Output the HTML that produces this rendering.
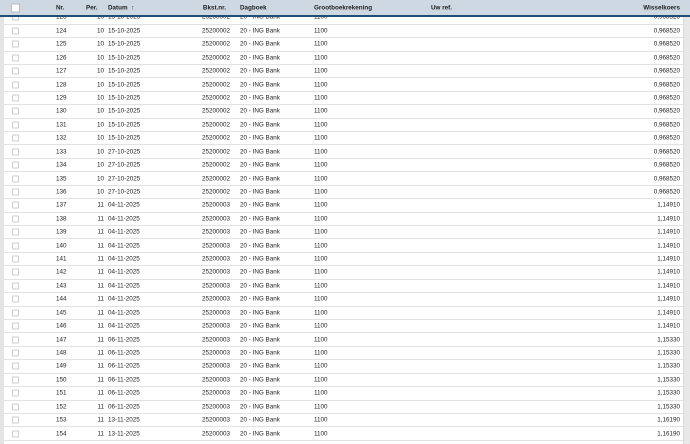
<!DOCTYPE html>
<html><head><style>
*{margin:0;padding:0;box-sizing:border-box}
body{width:690px;height:444px;overflow:hidden;background:#fff;font-family:"Liberation Sans",Arial,sans-serif;font-size:6.3px;color:#222;position:relative}
.lb{position:absolute;left:0;top:0;width:4px;height:444px;background:#e4e4e4}
.sb{position:absolute;right:0;top:0;width:7px;height:444px;background:#e8e8e8;border-left:1px solid #d8d8d8}
#rows{position:absolute;left:4px;right:7px;top:11.27px}
.r{height:13.43px;border-bottom:1px solid #e2e2e2;position:relative}
.r span,.h span{position:absolute;top:50%;transform:translateY(-50%);white-space:nowrap}
.cb{left:8px;width:7px;height:7px;border:1px solid #ccc;border-radius:1px}
.h{position:absolute;left:0;right:0;top:0;height:17px;background:#cdd8e2;border-bottom:2px solid #1f4e79;font-weight:bold;z-index:2}
.h span{top:8px}
.hcb{left:11px;width:9px;height:9px;background:#fff;border:1px solid #bbb}
</style></head><body>
<div id="rows">
<div class="r"><span class="cb"></span><span style="left:52px">123</span><span style="right:579px">10</span><span style="left:104px">15-10-2025</span><span style="right:453px">25200002</span><span style="left:236px">20 - ING Bank</span><span style="left:310px">1100</span><span style="right:3px">0,968520</span></div>
<div class="r"><span class="cb"></span><span style="left:52px">124</span><span style="right:579px">10</span><span style="left:104px">15-10-2025</span><span style="right:453px">25200002</span><span style="left:236px">20 - ING Bank</span><span style="left:310px">1100</span><span style="right:3px">0,968520</span></div>
<div class="r"><span class="cb"></span><span style="left:52px">125</span><span style="right:579px">10</span><span style="left:104px">15-10-2025</span><span style="right:453px">25200002</span><span style="left:236px">20 - ING Bank</span><span style="left:310px">1100</span><span style="right:3px">0,968520</span></div>
<div class="r"><span class="cb"></span><span style="left:52px">126</span><span style="right:579px">10</span><span style="left:104px">15-10-2025</span><span style="right:453px">25200002</span><span style="left:236px">20 - ING Bank</span><span style="left:310px">1100</span><span style="right:3px">0,968520</span></div>
<div class="r"><span class="cb"></span><span style="left:52px">127</span><span style="right:579px">10</span><span style="left:104px">15-10-2025</span><span style="right:453px">25200002</span><span style="left:236px">20 - ING Bank</span><span style="left:310px">1100</span><span style="right:3px">0,968520</span></div>
<div class="r"><span class="cb"></span><span style="left:52px">128</span><span style="right:579px">10</span><span style="left:104px">15-10-2025</span><span style="right:453px">25200002</span><span style="left:236px">20 - ING Bank</span><span style="left:310px">1100</span><span style="right:3px">0,968520</span></div>
<div class="r"><span class="cb"></span><span style="left:52px">129</span><span style="right:579px">10</span><span style="left:104px">15-10-2025</span><span style="right:453px">25200002</span><span style="left:236px">20 - ING Bank</span><span style="left:310px">1100</span><span style="right:3px">0,968520</span></div>
<div class="r"><span class="cb"></span><span style="left:52px">130</span><span style="right:579px">10</span><span style="left:104px">15-10-2025</span><span style="right:453px">25200002</span><span style="left:236px">20 - ING Bank</span><span style="left:310px">1100</span><span style="right:3px">0,968520</span></div>
<div class="r"><span class="cb"></span><span style="left:52px">131</span><span style="right:579px">10</span><span style="left:104px">15-10-2025</span><span style="right:453px">25200002</span><span style="left:236px">20 - ING Bank</span><span style="left:310px">1100</span><span style="right:3px">0,968520</span></div>
<div class="r"><span class="cb"></span><span style="left:52px">132</span><span style="right:579px">10</span><span style="left:104px">15-10-2025</span><span style="right:453px">25200002</span><span style="left:236px">20 - ING Bank</span><span style="left:310px">1100</span><span style="right:3px">0,968520</span></div>
<div class="r"><span class="cb"></span><span style="left:52px">133</span><span style="right:579px">10</span><span style="left:104px">27-10-2025</span><span style="right:453px">25200002</span><span style="left:236px">20 - ING Bank</span><span style="left:310px">1100</span><span style="right:3px">0,968520</span></div>
<div class="r"><span class="cb"></span><span style="left:52px">134</span><span style="right:579px">10</span><span style="left:104px">27-10-2025</span><span style="right:453px">25200002</span><span style="left:236px">20 - ING Bank</span><span style="left:310px">1100</span><span style="right:3px">0,968520</span></div>
<div class="r"><span class="cb"></span><span style="left:52px">135</span><span style="right:579px">10</span><span style="left:104px">27-10-2025</span><span style="right:453px">25200002</span><span style="left:236px">20 - ING Bank</span><span style="left:310px">1100</span><span style="right:3px">0,968520</span></div>
<div class="r"><span class="cb"></span><span style="left:52px">136</span><span style="right:579px">10</span><span style="left:104px">27-10-2025</span><span style="right:453px">25200002</span><span style="left:236px">20 - ING Bank</span><span style="left:310px">1100</span><span style="right:3px">0,968520</span></div>
<div class="r"><span class="cb"></span><span style="left:52px">137</span><span style="right:579px">11</span><span style="left:104px">04-11-2025</span><span style="right:453px">25200003</span><span style="left:236px">20 - ING Bank</span><span style="left:310px">1100</span><span style="right:3px">1,14910</span></div>
<div class="r"><span class="cb"></span><span style="left:52px">138</span><span style="right:579px">11</span><span style="left:104px">04-11-2025</span><span style="right:453px">25200003</span><span style="left:236px">20 - ING Bank</span><span style="left:310px">1100</span><span style="right:3px">1,14910</span></div>
<div class="r"><span class="cb"></span><span style="left:52px">139</span><span style="right:579px">11</span><span style="left:104px">04-11-2025</span><span style="right:453px">25200003</span><span style="left:236px">20 - ING Bank</span><span style="left:310px">1100</span><span style="right:3px">1,14910</span></div>
<div class="r"><span class="cb"></span><span style="left:52px">140</span><span style="right:579px">11</span><span style="left:104px">04-11-2025</span><span style="right:453px">25200003</span><span style="left:236px">20 - ING Bank</span><span style="left:310px">1100</span><span style="right:3px">1,14910</span></div>
<div class="r"><span class="cb"></span><span style="left:52px">141</span><span style="right:579px">11</span><span style="left:104px">04-11-2025</span><span style="right:453px">25200003</span><span style="left:236px">20 - ING Bank</span><span style="left:310px">1100</span><span style="right:3px">1,14910</span></div>
<div class="r"><span class="cb"></span><span style="left:52px">142</span><span style="right:579px">11</span><span style="left:104px">04-11-2025</span><span style="right:453px">25200003</span><span style="left:236px">20 - ING Bank</span><span style="left:310px">1100</span><span style="right:3px">1,14910</span></div>
<div class="r"><span class="cb"></span><span style="left:52px">143</span><span style="right:579px">11</span><span style="left:104px">04-11-2025</span><span style="right:453px">25200003</span><span style="left:236px">20 - ING Bank</span><span style="left:310px">1100</span><span style="right:3px">1,14910</span></div>
<div class="r"><span class="cb"></span><span style="left:52px">144</span><span style="right:579px">11</span><span style="left:104px">04-11-2025</span><span style="right:453px">25200003</span><span style="left:236px">20 - ING Bank</span><span style="left:310px">1100</span><span style="right:3px">1,14910</span></div>
<div class="r"><span class="cb"></span><span style="left:52px">145</span><span style="right:579px">11</span><span style="left:104px">04-11-2025</span><span style="right:453px">25200003</span><span style="left:236px">20 - ING Bank</span><span style="left:310px">1100</span><span style="right:3px">1,14910</span></div>
<div class="r"><span class="cb"></span><span style="left:52px">146</span><span style="right:579px">11</span><span style="left:104px">04-11-2025</span><span style="right:453px">25200003</span><span style="left:236px">20 - ING Bank</span><span style="left:310px">1100</span><span style="right:3px">1,14910</span></div>
<div class="r"><span class="cb"></span><span style="left:52px">147</span><span style="right:579px">11</span><span style="left:104px">06-11-2025</span><span style="right:453px">25200003</span><span style="left:236px">20 - ING Bank</span><span style="left:310px">1100</span><span style="right:3px">1,15330</span></div>
<div class="r"><span class="cb"></span><span style="left:52px">148</span><span style="right:579px">11</span><span style="left:104px">06-11-2025</span><span style="right:453px">25200003</span><span style="left:236px">20 - ING Bank</span><span style="left:310px">1100</span><span style="right:3px">1,15330</span></div>
<div class="r"><span class="cb"></span><span style="left:52px">149</span><span style="right:579px">11</span><span style="left:104px">06-11-2025</span><span style="right:453px">25200003</span><span style="left:236px">20 - ING Bank</span><span style="left:310px">1100</span><span style="right:3px">1,15330</span></div>
<div class="r"><span class="cb"></span><span style="left:52px">150</span><span style="right:579px">11</span><span style="left:104px">06-11-2025</span><span style="right:453px">25200003</span><span style="left:236px">20 - ING Bank</span><span style="left:310px">1100</span><span style="right:3px">1,15330</span></div>
<div class="r"><span class="cb"></span><span style="left:52px">151</span><span style="right:579px">11</span><span style="left:104px">06-11-2025</span><span style="right:453px">25200003</span><span style="left:236px">20 - ING Bank</span><span style="left:310px">1100</span><span style="right:3px">1,15330</span></div>
<div class="r"><span class="cb"></span><span style="left:52px">152</span><span style="right:579px">11</span><span style="left:104px">06-11-2025</span><span style="right:453px">25200003</span><span style="left:236px">20 - ING Bank</span><span style="left:310px">1100</span><span style="right:3px">1,15330</span></div>
<div class="r"><span class="cb"></span><span style="left:52px">153</span><span style="right:579px">11</span><span style="left:104px">13-11-2025</span><span style="right:453px">25200003</span><span style="left:236px">20 - ING Bank</span><span style="left:310px">1100</span><span style="right:3px">1,16190</span></div>
<div class="r"><span class="cb"></span><span style="left:52px">154</span><span style="right:579px">11</span><span style="left:104px">13-11-2025</span><span style="right:453px">25200003</span><span style="left:236px">20 - ING Bank</span><span style="left:310px">1100</span><span style="right:3px">1,16190</span></div>
</div>
<div class="lb"></div>
<div class="sb"></div>
<div class="h"><span class="hcb"></span><span style="left:56px">Nr.</span><span style="left:86px">Per.</span><span style="left:108px">Datum &nbsp;↑</span><span style="right:464px">Bkst.nr.</span><span style="left:240px">Dagboek</span><span style="left:314px">Grootboekrekening</span><span style="left:431px">Uw ref.</span><span style="right:10px">Wisselkoers</span></div>
</body></html>
